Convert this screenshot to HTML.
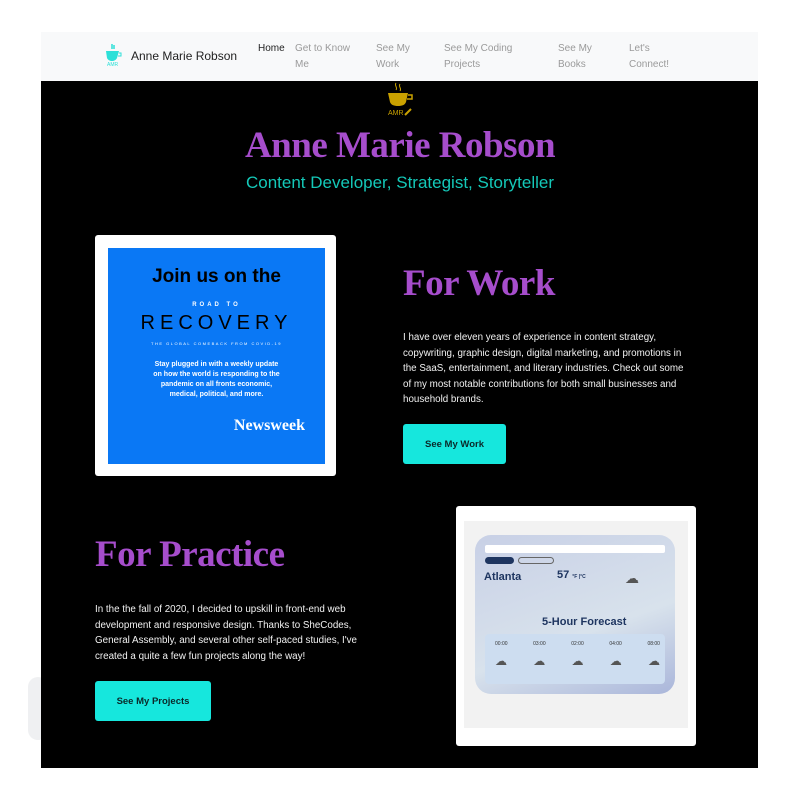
<!DOCTYPE html>
<html><head><meta charset="utf-8"><style>
*{margin:0;padding:0;box-sizing:border-box}
body{width:800px;height:800px;background:#fff;position:relative;overflow:hidden;font-family:"Liberation Sans",sans-serif}
.a{position:absolute}
.nav{left:41px;top:32px;width:717px;height:49px;background:#f8f9fa}
.nl{font-size:10px;color:#9a9a9a;line-height:16px}
.main{left:41px;top:81px;width:717px;height:687px;background:#000}
.serif{font-family:"Liberation Serif",serif;font-weight:bold;color:#a64dcc;white-space:nowrap}
.p{font-size:9.8px;line-height:15.6px;color:#f2f2f2}
.btn{background:#16e7dd;border-radius:3px;font-weight:bold;font-size:9.5px;color:#0a2a2a;display:flex;align-items:center;justify-content:center}
</style></head><body>
<div class="a" style="left:28px;top:677px;width:20px;height:63px;background:#eff0f2;border-radius:12px"></div>
<div class="a nav"></div>
<svg class="a" style="left:103px;top:43px" width="20" height="24" viewBox="0 0 20 24"><path d="M9 1v5M11 2v4" stroke="#2de0d8" stroke-width="1.5"/><path d="M3 8h13l-2 7c-1 2-3 3-5 3s-4-1-5-3z" fill="#2de0d8"/><path d="M16 10h2v3h-3" stroke="#2de0d8" fill="none"/><text x="4" y="23" font-size="5" fill="#2de0d8" font-family="Liberation Sans">AMR</text></svg>
<div class="a" style="left:131px;top:49px;font-size:12px;color:#222">Anne Marie Robson</div>
<div class="a nl" style="left:258px;top:41px;color:#222">Home</div>
<div class="a nl" style="left:295px;top:41px">Get to Know<br>Me</div>
<div class="a nl" style="left:376px;top:41px">See My<br>Work</div>
<div class="a nl" style="left:444px;top:41px">See My Coding<br>Projects</div>
<div class="a nl" style="left:558px;top:41px">See My<br>Books</div>
<div class="a nl" style="left:629px;top:41px">Let's<br>Connect!</div>
<div class="a main"></div>
<svg class="a" style="left:383px;top:82px" width="34" height="36" viewBox="0 0 34 36"><path d="M13 1c-2 3 2 4 0 7M17 2c-2 3 2 4 0 7" stroke="#c9a100" fill="none"/><path d="M5 11h20l-2 9c-1 3-4 4-8 4s-7-1-8-4z" fill="#c9a100"/><path d="M25 13h4v4h-5" stroke="#c9a100" fill="none" stroke-width="1.5"/><text x="5" y="33" font-size="7" fill="#c9a100" font-family="Liberation Sans">AMR</text><path d="M22 33l6-6" stroke="#c9a100" stroke-width="2"/></svg>
<div class="a serif" style="left:0;width:800px;text-align:center;top:124px;font-size:37px;letter-spacing:-0.5px">Anne Marie Robson</div>
<div class="a" style="left:0;width:800px;text-align:center;top:173px;font-size:17px;color:#14c8b8">Content Developer, Strategist, Storyteller</div>
<div class="a" style="left:95px;top:235px;width:241px;height:241px;background:#fff;border-radius:3px"></div>
<div class="a" style="left:108px;top:248px;width:217px;height:216px;background:#0a78f5;color:#fff;text-align:center">
<div style="color:#000;font-weight:bold;font-size:19px;margin-top:18px">Join us on the</div>
<div style="font-size:6px;font-weight:bold;letter-spacing:3px;margin-top:14px">ROAD TO</div>
<div style="color:#000;font-size:20px;letter-spacing:5px;margin-top:4px">RECOVERY</div>
<div style="font-size:4px;letter-spacing:1.5px;margin-top:6px">THE GLOBAL COMEBACK FROM COVID-19</div>
<div style="font-size:7px;font-weight:bold;line-height:10px;margin-top:14px">Stay plugged in with a weekly update<br>on how the world is responding to the<br>pandemic on all fronts economic,<br>medical, political, and more.</div>
<div style="font-family:'Liberation Serif',serif;font-weight:bold;font-size:16px;text-align:right;margin:17px 20px 0 0">Newsweek</div>
</div>
<div class="a serif" style="left:403px;top:262px;font-size:37px;letter-spacing:-0.5px">For Work</div>
<div class="a p" style="left:403px;top:330px;width:290px">I have over eleven years of experience in content strategy, copywriting, graphic design, digital marketing, and promotions in the SaaS, entertainment, and literary industries. Check out some of my most notable contributions for both small businesses and household brands.</div>
<div class="a btn" style="left:403px;top:424px;width:103px;height:40px">See My Work</div>
<div class="a serif" style="left:95px;top:533px;font-size:37px;letter-spacing:-0.5px">For Practice</div>
<div class="a p" style="left:95px;top:602px;width:285px">In the the fall of 2020, I decided to upskill in front-end web development and responsive design. Thanks to SheCodes, General Assembly, and several other self-paced studies, I've created a quite a few fun projects along the way!</div>
<div class="a btn" style="left:95px;top:681px;width:116px;height:40px">See My Projects</div>
<div class="a" style="left:456px;top:506px;width:240px;height:240px;background:#fff;border-radius:3px"></div>
<div class="a" style="left:464px;top:521px;width:224px;height:207px;background:#f2f2f2"></div>
<div class="a" style="left:475px;top:535px;width:200px;height:159px;border-radius:16px;background:linear-gradient(160deg,#c8d0e6,#d8e2ec 60%,#aab6da)"></div>
<div class="a" style="left:485px;top:545px;width:180px;height:8px;background:#fff;border-radius:2px"></div>
<div class="a" style="left:485px;top:557px;width:29px;height:7px;background:#1e3560;border-radius:4px"></div>
<div class="a" style="left:518px;top:557px;width:36px;height:7px;border:1px solid #666;border-radius:4px"></div>
<div class="a" style="left:484px;top:571px;font-size:11px;font-weight:bold;color:#1e3560">Atlanta</div>
<div class="a" style="left:557px;top:569px;font-size:11px;font-weight:bold;color:#1e3560">57 <span style="font-size:5px">°F |°C</span></div>
<div class="a" style="left:542px;top:616px;font-size:11px;font-weight:bold;color:#1e3560">5-Hour Forecast</div>
<div class="a" style="left:485px;top:634px;width:180px;height:50px;background:#cdddf0;border-radius:4px"></div>
<div class="a" style="left:495px;top:641px;width:165px;display:flex;justify-content:space-between;font-size:5px;color:#333"><span>00:00</span><span>03:00</span><span>02:00</span><span>04:00</span><span>08:00</span></div>
<div class="a" style="left:495px;top:654px;width:165px;display:flex;justify-content:space-between;font-size:12px;color:#555"><span>☁</span><span>☁</span><span>☁</span><span>☁</span><span>☁</span></div>
<div class="a" style="left:625px;top:570px;font-size:14px;color:#555">☁</div>
</body></html>
